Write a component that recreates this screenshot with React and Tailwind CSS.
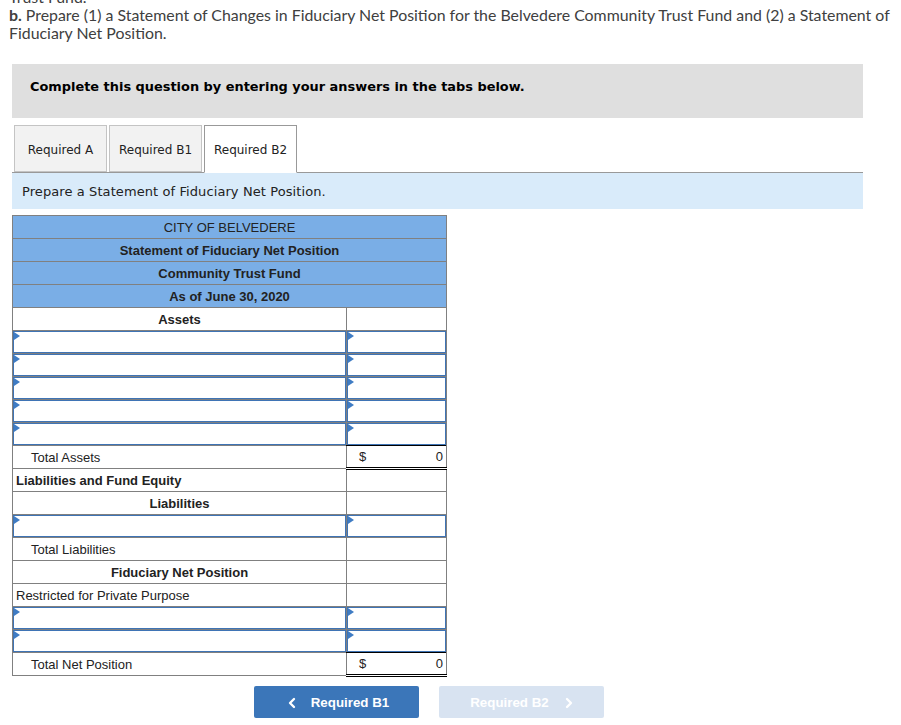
import React from 'react';
import { ChevronLeft, ChevronRight } from 'lucide-react';

function TitleRow({ children, bold }) {
  return (
    <tr className="h-[23px]">
      <td colSpan={2} className={`border border-[#808080] bg-[#7aaee6] p-0 pt-px text-center ${bold ? 'font-bold' : ''}`}>
        {children}
      </td>
    </tr>
  );
}

function InputCell() {
  return (
    <td className="border border-[#808080] p-0 h-[23px]">
      <div className="relative h-[22px] border border-[#3f74b5]">
        <span className="absolute left-0 top-0 border-y-[4px] border-l-[6px] border-y-transparent border-l-[#3f7cc4]" />
      </div>
    </td>
  );
}

function InputRow() {
  return (
    <tr className="h-[23px]">
      <InputCell />
      <InputCell />
    </tr>
  );
}

function Row({ children, className = '' }) {
  return (
    <tr className="h-[23px]">
      <td className={`border border-[#808080] p-0 pt-px ${className}`}>{children}</td>
      <td className="border border-[#808080] p-0" />
    </tr>
  );
}

function TotalRow({ label }) {
  return (
    <tr className="h-[23px]">
      <td className="border border-[#808080] p-0 pt-px pl-[18px]">{label}</td>
      <td className="border border-[#808080] border-t-black border-b-[3px] border-b-black border-double p-0">
        <div className="flex justify-between pl-[12px] pr-[3px] text-[13px]">
          <span>$</span>
          <span>0</span>
        </div>
      </td>
    </tr>
  );
}

function Tab({ label, active }) {
  return (
    <div
      className={`w-[93px] flex items-center justify-center border text-[12px] ${
        active
          ? 'bg-white border-[#999999] border-b-white h-[48px] pt-px -mb-px relative z-10'
          : 'bg-[#f2f2f2] border-[#c4c4c4] h-[47px] pt-[2px]'
      }`}
    >
      {label}
    </div>
  );
}

export default function App() {
  return (
    <div className="relative h-[725px] overflow-hidden bg-white text-[#222222]">
      <div className="-mt-[12px] pl-[9px] pr-[8px] font-['Lato',sans-serif] text-[15.88px] leading-[18px] text-[#404040]">
        <p>Trust Fund.</p>
        <p>
          <b>b.</b> Prepare (1) a Statement of Changes in Fiduciary Net Position for the Belvedere Community Trust Fund and (2) a Statement of Fiduciary Net Position.
        </p>
      </div>

      <div className="mt-[22px] ml-[12px] w-[851px] h-[54px] bg-[#dfdfdf] pl-[18px] pt-[13px] font-['DejaVu_Sans',sans-serif] font-bold text-[12.92px] leading-[20px] text-black">
        Complete this question by entering your answers in the tabs below.
      </div>

      <div className="mt-[7px] ml-[14px] flex gap-[2px] font-['DejaVu_Sans',sans-serif]">
        <Tab label="Required A" />
        <Tab label="Required B1" />
        <Tab label="Required B2" active />
      </div>
      <div className="ml-[12px] w-[851px] h-[37px] border-t border-[#999999] bg-[#d9ebfa] pl-[10px] pt-px flex items-center font-['DejaVu_Sans',sans-serif] text-[13px] tracking-[0.09px]">
        Prepare a Statement of Fiduciary Net Position.
      </div>

      <table className="mt-[6px] ml-[12px] w-[435px] table-fixed border-collapse font-['Liberation_Sans',sans-serif] text-[13px] leading-[20px] text-[#222222]">
        <colgroup>
          <col className="w-[334px]" />
          <col className="w-[100px]" />
        </colgroup>
        <tbody>
          <TitleRow>CITY OF BELVEDERE</TitleRow>
          <TitleRow bold>Statement of Fiduciary Net Position</TitleRow>
          <TitleRow bold>Community Trust Fund</TitleRow>
          <TitleRow bold>As of June 30, 2020</TitleRow>
          <Row className="text-center font-bold">Assets</Row>
          <InputRow />
          <InputRow />
          <InputRow />
          <InputRow />
          <InputRow />
          <TotalRow label="Total Assets" />
          <Row className="font-bold pl-[3px]">Liabilities and Fund Equity</Row>
          <Row className="text-center font-bold">Liabilities</Row>
          <InputRow />
          <Row className="pl-[18px]">Total Liabilities</Row>
          <Row className="text-center font-bold">Fiduciary Net Position</Row>
          <Row className="pl-[3px]">Restricted for Private Purpose</Row>
          <InputRow />
          <InputRow />
          <TotalRow label="Total Net Position" />
        </tbody>
      </table>

      <div className="mt-[9px] ml-[254px] flex gap-[20px] font-['Liberation_Sans',sans-serif] font-bold text-[13.33px] text-white">
        <button className="h-[32px] w-[165px] pt-px rounded-[2px] bg-[#3b76b9] flex items-center justify-center gap-[11px]">
          <ChevronLeft size={16} strokeWidth={3.5} />
          Required B1
        </button>
        <button className="h-[32px] w-[165px] pt-px pl-[4px] rounded-[2px] bg-[#d8e3f1] flex items-center justify-center gap-[12px]">
          Required B2
          <ChevronRight size={16} strokeWidth={3.5} />
        </button>
      </div>
    </div>
  );
}
